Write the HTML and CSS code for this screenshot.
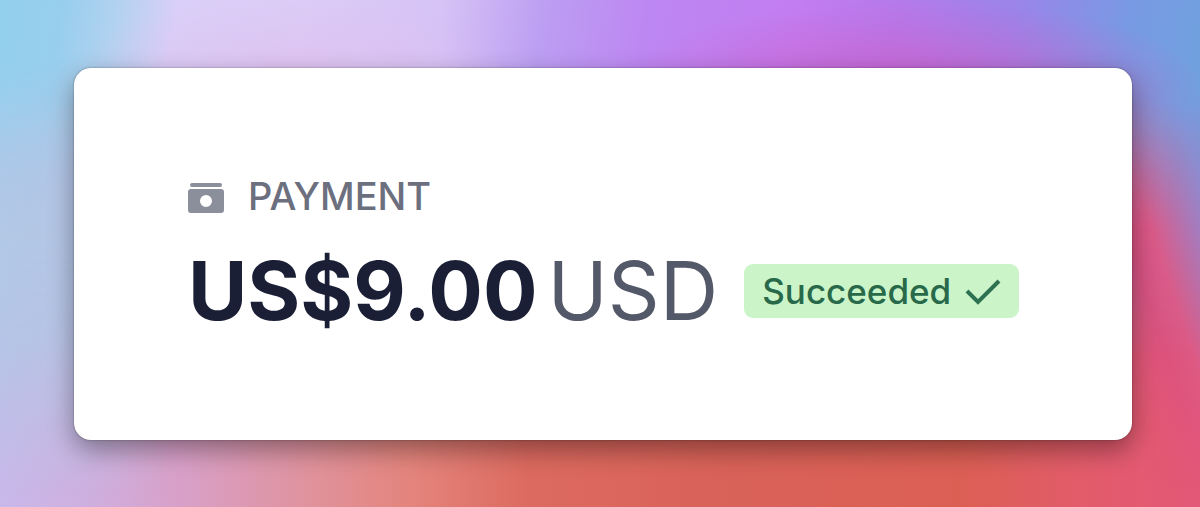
FILE: index.html
```html
<!DOCTYPE html>
<html lang="en">
<head>
<meta charset="utf-8">
<meta name="viewport" content="width=device-width, initial-scale=1">
<title>Payment</title>
<link rel="stylesheet" href="styles.css">
</head>
<body>
<main class="page">
  <section class="card" aria-labelledby="payment-label">
    <div class="label">
      <svg class="label-icon" viewBox="0 0 36 32" aria-hidden="true">
        <rect x="2" y="1" width="32" height="4" rx="2"/>
        <path fill-rule="evenodd" d="M3 7H33Q36 7 36 10V28Q36 31 33 31H3Q0 31 0 28V10Q0 7 3 7ZM18 13A6 6 0 1 0 18 25A6 6 0 1 0 18 13Z"/>
      </svg>
      <h1 class="label-text" id="payment-label">PAYMENT</h1>
    </div>
    <div class="summary">
      <p class="total"><span class="amount">US$9.00</span><span class="currency">USD</span></p>
      <span class="badge">Succeeded
        <svg class="badge-icon" viewBox="0 0 36 26" aria-hidden="true"><path d="M2 12L13 23L34 2"/></svg>
      </span>
    </div>
  </section>
</main>
</body>
</html>
```
FILE: styles.css
```css
* {
  box-sizing: border-box;
}

body {
  margin: 0;
  font-family: Inter, "Liberation Sans", sans-serif;
}

.page {
  position: relative;
  isolation: isolate;
  display: flex;
  min-height: 100vh;
  padding: 68px 68px 67px 74px;
  background: linear-gradient(90deg, #c8b8ea 0%, #ceb0e0 7%, #d8a0c8 15%, #e0929c 26%, #e4857d 34%, #dc6a60 44%, #d96259 60%, #dc5f54 80%, #e25c6a 90%, #e45878 100%);
}

.page::before {
  content: "";
  position: absolute;
  inset: 0;
  z-index: -1;
  background:
    radial-gradient(ellipse 24% 16% at 76% 16%, #cc60cccc, #cc60cc00),
    radial-gradient(ellipse 18% 16% at 24% 15%, #dfbdedaa, #dfbded00),
    linear-gradient(98deg, #92d0ee 0%, #98ceed 5%, #b0d2f0 9%, #d9cff8 14%, #dcccf7 24%, #d6c2f5 35%, #bc9ef2 43%, #bd87f2 51%, #c27df0 63%, #b47aea 71%, #9a85e9 80%, #7899e3 89%, #6ea3de 97%);
  mask-image: linear-gradient(#000 20%, transparent 70%);
}

.page::after {
  content: "";
  position: absolute;
  inset: 0;
  z-index: -1;
  background:
    linear-gradient(90deg, #b2c8e6, #b4c4e4 8%, transparent 14%),
    linear-gradient(72deg, transparent 85%, #d95080 89%, #db5a88 91%, #8a8cd8 96%, #749ae0 99%);
  mask-image: linear-gradient(transparent 12%, #000 45%, #000c 68%, transparent 98%);
}

.card {
  flex: 1;
  padding: 104px 72px 96px 114px;
  border-radius: 17px;
  background: #fff;
  box-shadow: 0 0 2px #0006, 0 10px 26px #00000060;
}

.label {
  display: flex;
  align-items: center;
  gap: 24px;
}

.label-icon {
  width: 36px;
  height: 32px;
  margin-top: 4px;
  fill: #8b8f9c;
}

.label-text {
  margin: 0;
  color: #6c6f7e;
  font-size: 38px;
  font-weight: 450;
  line-height: 48px;
}

.summary {
  display: flex;
  flex-wrap: wrap;
  align-items: center;
  gap: 26px;
  margin-top: 23px;
}

.total {
  display: flex;
  gap: 10px;
  margin: 0;
  font-size: 81px;
  line-height: 96px;
}

.amount {
  color: #1a1f36;
  font-weight: 700;
}

.currency {
  color: #545969;
  font-weight: 400;
}

.badge {
  display: flex;
  align-items: center;
  gap: 14px;
  padding: 5px 18px;
  border-radius: 9px;
  background: #cbf4c9;
  color: #28694a;
  font-size: 35px;
  font-weight: 500;
  line-height: 44px;
}

.badge-icon {
  width: 36px;
  height: 26px;
  margin-top: 2px;
  fill: none;
  stroke: #2f7252;
  stroke-width: 4;
}
```
